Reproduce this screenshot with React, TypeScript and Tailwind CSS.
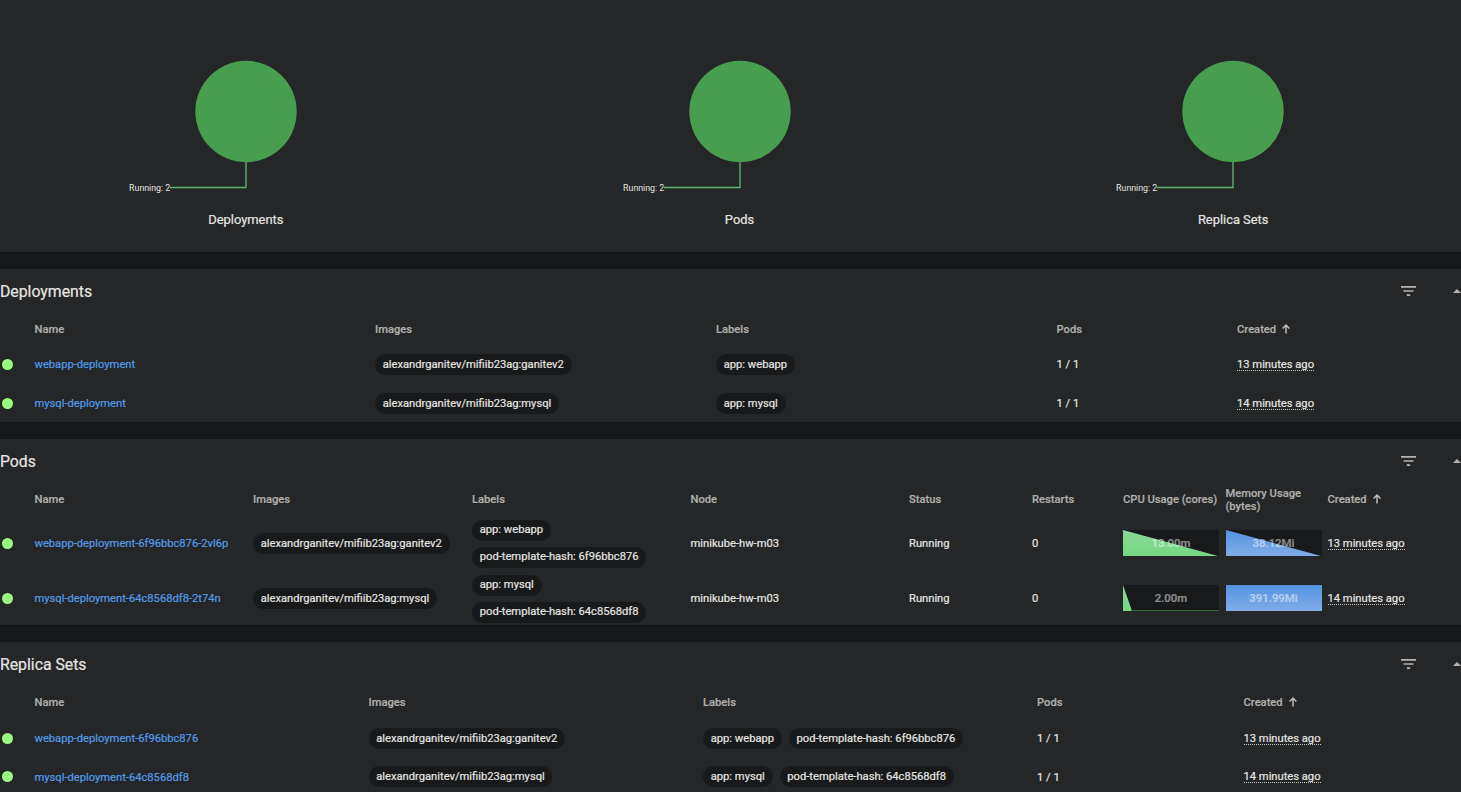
import React from "react";

type Cell = React.ReactNode;

const Chips = ({ items, stacked = false }: { items: string[]; stacked?: boolean }) => (
  <div className={stacked ? "flex flex-col items-start gap-[6px]" : "flex items-center gap-[7px]"}>
    {items.map((item) => (
      <span
        key={item}
        className={`flex h-[21px] items-center rounded-full bg-[#18191b] px-[7.75px] whitespace-nowrap ${stacked ? "" : "pt-[1.5px]"}`}
      >
        {item}
      </span>
    ))}
  </div>
);

const Dot = () => <span className="ml-[2px] block size-[11px] rounded-full bg-[#98fb80]" />;

const NameLink = ({ children }: { children: string }) => (
  <a className="block pt-[2px] whitespace-nowrap text-[#549be8]">{children}</a>
);

const Age = ({ children }: { children: string }) => (
  <span className="block h-[13px] w-fit border-b border-dotted border-[#c9c9c6] leading-[13px] whitespace-nowrap">
    {children}
  </span>
);

const Created = () => (
  <span className="flex items-center gap-[6px]">
    Created
    <svg viewBox="0 0 8 10" className="mb-px h-[10px] w-[8px]" fill="none" stroke="#bdbcb8" strokeWidth="1.5">
      <path d="M4 9.6V1.2M0.6 4.5L4 1.1L7.4 4.5" />
    </svg>
  </span>
);

const Spark = ({ label, color, points, line = false }: { label: string; color: "green" | "blue"; points: string; line?: boolean }) => (
  <div className="relative mb-px h-[26px] w-[96px] bg-[#18191b]">
    <svg viewBox="0 0 96 26" className="block h-[26px] w-[96px]">
      <defs>
        <linearGradient id="green" x1="0" y1="0" x2="0" y2="1">
          <stop offset="0" stopColor="#8bd69a" />
          <stop offset="1" stopColor="#74d980" />
        </linearGradient>
        <linearGradient id="blue" x1="0" y1="0" x2="0" y2="1">
          <stop offset="0" stopColor="#5493e0" />
          <stop offset="1" stopColor="#80ace8" />
        </linearGradient>
      </defs>
      <polygon points={points} fill={color === "green" ? "url(#green)" : "url(#blue)"} />
      {line && <rect x="8" y="25" width="88" height="1" fill="#326b3c" />}
    </svg>
    <span className="absolute inset-0 flex items-center justify-center pt-px text-[11.4px] font-medium text-white opacity-50">
      {label}
    </span>
  </div>
);

type CardProps = { title: string; columns: string; head: Cell[]; headHeight: string; rows: Cell[][]; rowHeight: string };

const Card = ({ title, columns, head, headHeight, rows, rowHeight }: CardProps) => (
  <section className="mb-4 shrink-0 bg-[#242628] shadow-[inset_0_-1px_0_#111213]">
    <header className="flex h-[44px] items-center text-[15.8px] text-[#e6e5e1]">
      <h2 className="flex-1 pt-px">{title}</h2>
      <svg viewBox="0 0 15 10" className="mr-[37px] h-[10px] w-[15px]" fill="#b5b4b0">
        <path d="M0 0h15v1.7H0zM2.5 4.15h10v1.7h-10zM5.8 8.3h3.4V10H5.8z" />
      </svg>
      <svg viewBox="0 0 8 4" className="h-[4px] w-[8px]" fill="#b5b4b0">
        <path d="M0 4L4 0L8 4z" />
      </svg>
    </header>
    <div className={`grid items-center leading-[13px] font-medium text-[#b0afab] ${headHeight} ${columns}`}>
      <span />
      {head.map((cell, i) => (
        <div key={i}>{cell}</div>
      ))}
    </div>
    {rows.map((row, i) => (
      <div key={i} className={`grid items-center ${rowHeight} ${columns}`}>
        <Dot />
        {row.map((cell, j) => (
          <div key={j} className={typeof cell === "string" ? "pt-[2px]" : ""}>
            {cell}
          </div>
        ))}
      </div>
    ))}
  </section>
);

const Pie = ({ title }: { title: string }) => (
  <div className="flex h-[252px] flex-1 flex-col items-center pt-[60px]">
    <svg viewBox="0 0 240 140" className="h-[140px] w-[240px]">
      <circle cx="120" cy="51.5" r="50.7" fill="#479e4e" />
      <path d="M120 102V127.5H44" fill="none" stroke="#5fb874" strokeWidth="1.3" />
      <text x="44.3" y="130.5" textAnchor="end" fill="#e6e5e1" fontSize="8.8">
        Running: 2
      </text>
    </svg>
    <h3 className="mt-[11px] text-[12.9px] leading-[18px] text-[#e6e5e1]">{title}</h3>
  </div>
);

export default function App() {
  const image = (tag: string) => <Chips items={[`alexandrganitev/mifiib23ag:${tag}`]} />;
  return (
    <main className="flex h-[792px] w-[1461px] flex-col overflow-hidden bg-[#17181a] font-['Roboto',sans-serif] text-[11.18px] text-[#e6e5e1] [-webkit-text-stroke:0.2px]">
      <section className="mb-4 flex h-[253px] w-full shrink-0 bg-[#242628] shadow-[inset_0_-1px_0_#111213]">
        <div className="-ml-px flex w-[1481px] shrink-0">
          <Pie title="Deployments" />
          <Pie title="Pods" />
          <Pie title="Replica Sets" />
        </div>
      </section>
      <Card
        title="Deployments"
        columns="grid-cols-[34.5px_340.5px_341px_340.5px_180.5px_1fr]"
        headHeight="h-[32px]"
        rowHeight="h-[39px]"
        head={["Name", "Images", "Labels", "Pods", <Created />]}
        rows={[
          [<NameLink>webapp-deployment</NameLink>, image("ganitev2"), <Chips items={["app: webapp"]} />, "1 / 1", <Age>13 minutes ago</Age>],
          [<NameLink>mysql-deployment</NameLink>, image("mysql"), <Chips items={["app: mysql"]} />, "1 / 1", <Age>14 minutes ago</Age>],
        ]}
      />
      <Card
        title="Pods"
        columns="grid-cols-[34.5px_218.5px_219px_218.5px_218.5px_123px_91px_102.5px_102px_1fr]"
        headHeight="h-[33px]"
        rowHeight="h-[55px]"
        head={[
          "Name",
          "Images",
          "Labels",
          "Node",
          "Status",
          "Restarts",
          <span className="whitespace-nowrap">CPU Usage (cores)</span>,
          "Memory Usage (bytes)",
          <Created />,
        ]}
        rows={[
          [
            <NameLink>webapp-deployment-6f96bbc876-2vl6p</NameLink>,
            image("ganitev2"),
            <Chips stacked items={["app: webapp", "pod-template-hash: 6f96bbc876"]} />,
            "minikube-hw-m03",
            "Running",
            "0",
            <Spark label="13.00m" color="green" points="0,0 95,26 0,26" />,
            <Spark label="38.12Mi" color="blue" points="0,0 95,26 0,26" />,
            <Age>13 minutes ago</Age>,
          ],
          [
            <NameLink>mysql-deployment-64c8568df8-2t74n</NameLink>,
            image("mysql"),
            <Chips stacked items={["app: mysql", "pod-template-hash: 64c8568df8"]} />,
            "minikube-hw-m03",
            "Running",
            "0",
            <Spark label="2.00m" color="green" points="0,0 9,26 0,26" line />,
            <Spark label="391.99Mi" color="blue" points="0,0 96,0 96,26 0,26" />,
            <Age>14 minutes ago</Age>,
          ],
        ]}
      />
      <Card
        title="Replica Sets"
        columns="grid-cols-[34.5px_334px_334.5px_334px_206.5px_1fr]"
        headHeight="h-[33px]"
        rowHeight="h-[38.6px]"
        head={["Name", "Images", "Labels", "Pods", <Created />]}
        rows={[
          [
            <NameLink>webapp-deployment-6f96bbc876</NameLink>,
            image("ganitev2"),
            <Chips items={["app: webapp", "pod-template-hash: 6f96bbc876"]} />,
            "1 / 1",
            <Age>13 minutes ago</Age>,
          ],
          [
            <NameLink>mysql-deployment-64c8568df8</NameLink>,
            image("mysql"),
            <Chips items={["app: mysql", "pod-template-hash: 64c8568df8"]} />,
            "1 / 1",
            <Age>14 minutes ago</Age>,
          ],
        ]}
      />
    </main>
  );
}
